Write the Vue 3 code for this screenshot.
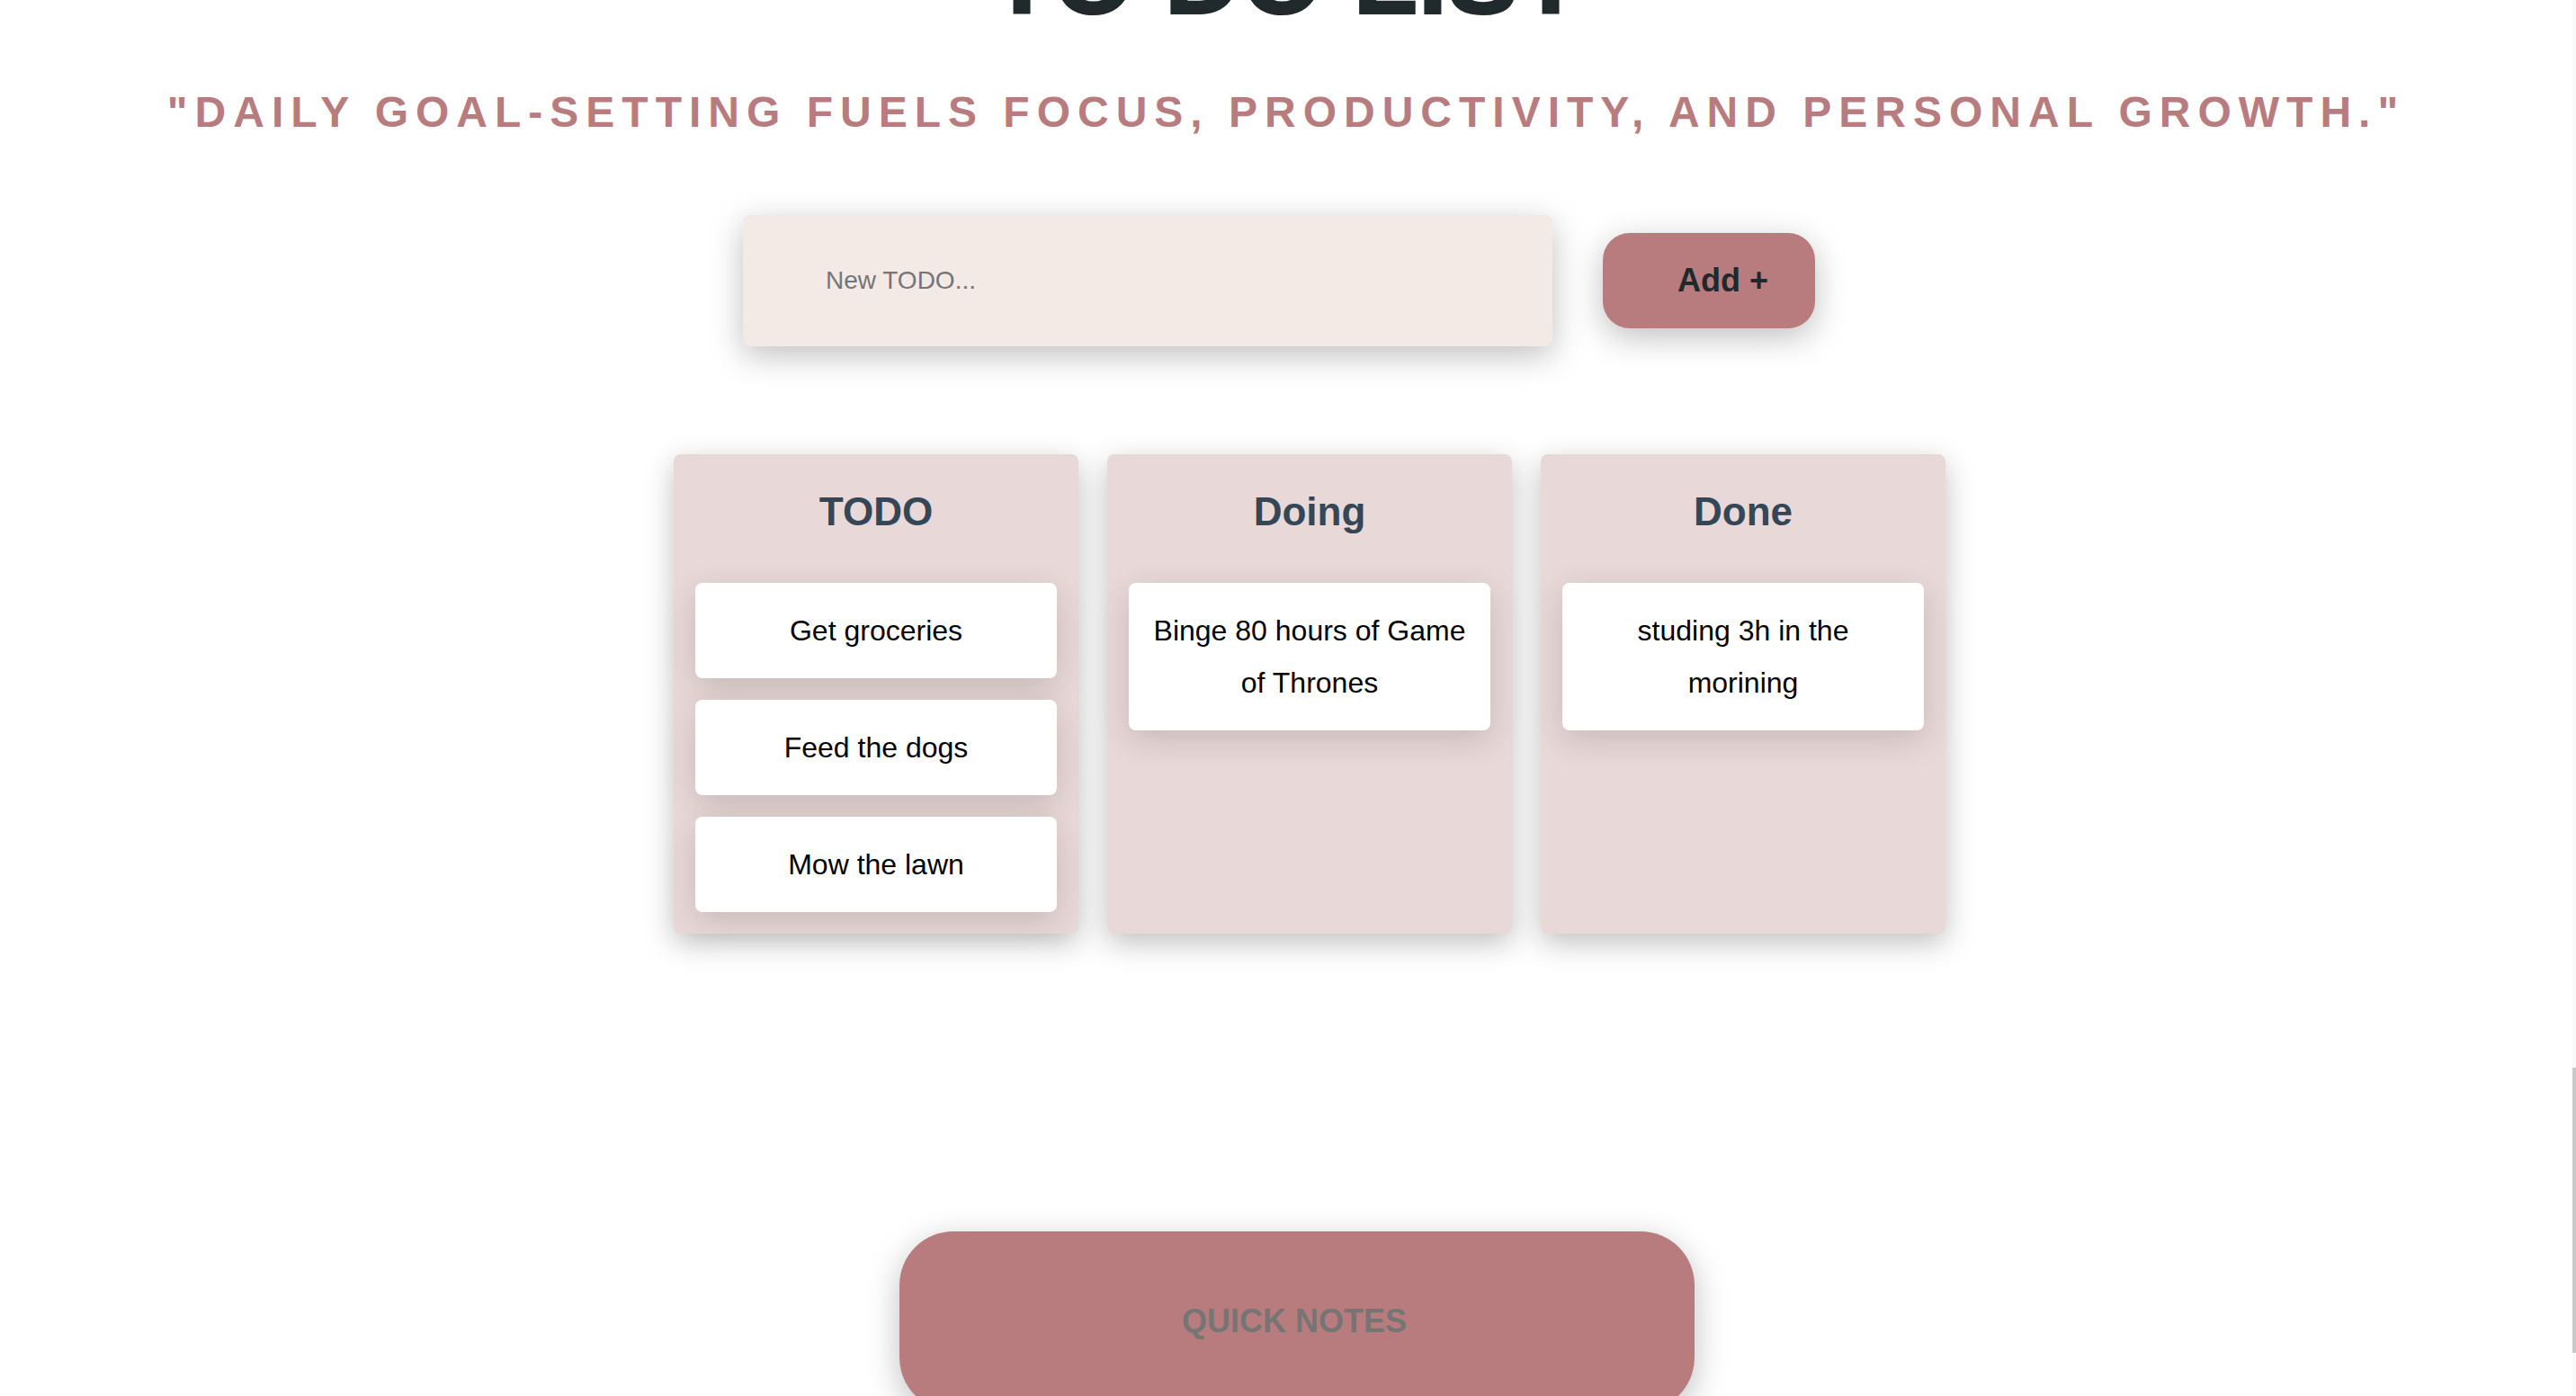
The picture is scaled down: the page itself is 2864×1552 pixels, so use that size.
<script setup>
import { ref } from 'vue'

const draft = ref('')
const notesTitle = ref('')

const columns = ref([
  { name: 'TODO', tasks: ['Get groceries', 'Feed the dogs', 'Mow the lawn'] },
  { name: 'Doing', tasks: ['Binge 80 hours of Game of Thrones'] },
  { name: 'Done', tasks: ['studing 3h in the morining'] },
])

function addTask() {
  const text = draft.value.trim()
  if (!text) return
  columns.value[0].tasks.push(text)
  draft.value = ''
}
</script>

<template>
  <div class="viewport">
    <main class="page">
      <h1 class="title">TO DO LIST</h1>
      <p class="quote">"DAILY GOAL-SETTING FUELS FOCUS, PRODUCTIVITY, AND PERSONAL GROWTH."</p>

      <form class="new-task" @submit.prevent="addTask">
        <input v-model="draft" class="task-input" type="text" placeholder="New TODO..." aria-label="New TODO" />
        <button class="add-button" type="submit">Add +</button>
      </form>

      <div class="board">
        <section v-for="column in columns" :key="column.name" class="column">
          <h2 class="column-title">{{ column.name }}</h2>
          <ul class="tasks">
            <li v-for="task in column.tasks" :key="task" class="task">{{ task }}</li>
          </ul>
        </section>
      </div>

      <div class="notes">
        <input v-model="notesTitle" class="notes-input" type="text" placeholder="QUICK NOTES" aria-label="Quick notes" />
      </div>
    </main>
    <div class="scroll-track" aria-hidden="true">
      <div class="scroll-thumb"></div>
    </div>
  </div>
</template>

<style>
body {
  margin: 0;
  background: #fff;
}
</style>

<style scoped>
.viewport {
  display: flex;
  height: 100vh;
  overflow: hidden;
  font-family: "Liberation Sans", Arial, sans-serif;
}

.page {
  flex: 1;
  min-width: 0;
}

.title {
  margin: -100px 0 0;
  font-size: 118px;
  line-height: 148px;
  font-weight: 700;
  text-align: center;
  color: #20292c;
  -webkit-text-stroke: 2px #20292c;
}

.quote {
  margin: 48px 0 0;
  font-size: 48px;
  line-height: 58px;
  font-weight: 700;
  letter-spacing: 8px;
  text-align: center;
  white-space: nowrap;
  color: #b87c7e;
}

.new-task {
  display: flex;
  justify-content: center;
  align-items: center;
  gap: 56px;
  margin-top: 85px;
  padding-right: 16px;
}

.task-input,
.add-button,
.notes-input {
  box-sizing: border-box;
  border: 0;
  outline: 0;
  font-family: inherit;
  box-shadow: 0 10px 36px rgba(0, 0, 0, 0.25);
}

.task-input {
  width: 900px;
  height: 146px;
  padding: 0 92px;
  border-radius: 8px;
  background: #f3eae5;
  font-size: 28px;
  color: #20292c;
}

.task-input::placeholder,
.notes-input::placeholder {
  color: #757575;
  opacity: 1;
}

.add-button {
  height: 106px;
  padding: 0 52px 0 83px;
  border-radius: 30px;
  background: #b87c7e;
  font-size: 36px;
  font-weight: 700;
  color: #20292c;
}

.board {
  display: flex;
  justify-content: center;
  gap: 32px;
  margin-top: 120px;
  padding-left: 52px;
}

.column {
  box-sizing: border-box;
  width: 450px;
  padding: 24px;
  border-radius: 8px;
  background: #e9d8d8;
  box-shadow: 0 10px 32px rgba(0, 0, 0, 0.25);
}

.column-title {
  margin: 0 0 39px;
  font-size: 44px;
  line-height: 80px;
  font-weight: 700;
  text-align: center;
  color: #334757;
}

.tasks {
  display: flex;
  flex-direction: column;
  gap: 24px;
  margin: 0;
  padding: 0;
  list-style: none;
}

.task {
  padding: 24px;
  border-radius: 8px;
  background: #fff;
  box-shadow: 0 10px 36px rgba(0, 0, 0, 0.15);
  font-size: 32px;
  line-height: 58px;
  text-align: center;
  color: #000;
}

.notes {
  display: flex;
  justify-content: center;
  margin-top: 331px;
  padding-left: 24px;
}

.notes-input {
  width: 884px;
  height: 200px;
  padding: 0 16px 0 10px;
  border-radius: 60px;
  background: #b87c7e;
  font-size: 36px;
  font-weight: 700;
  text-align: center;
  color: #20292c;
}

.scroll-track {
  display: flex;
  flex-direction: column;
  justify-content: flex-end;
  box-sizing: border-box;
  width: 4px;
  padding-bottom: 48px;
  background: #fafafa;
}

.scroll-thumb {
  height: 317px;
  background: #c9c9c9;
}
</style>
